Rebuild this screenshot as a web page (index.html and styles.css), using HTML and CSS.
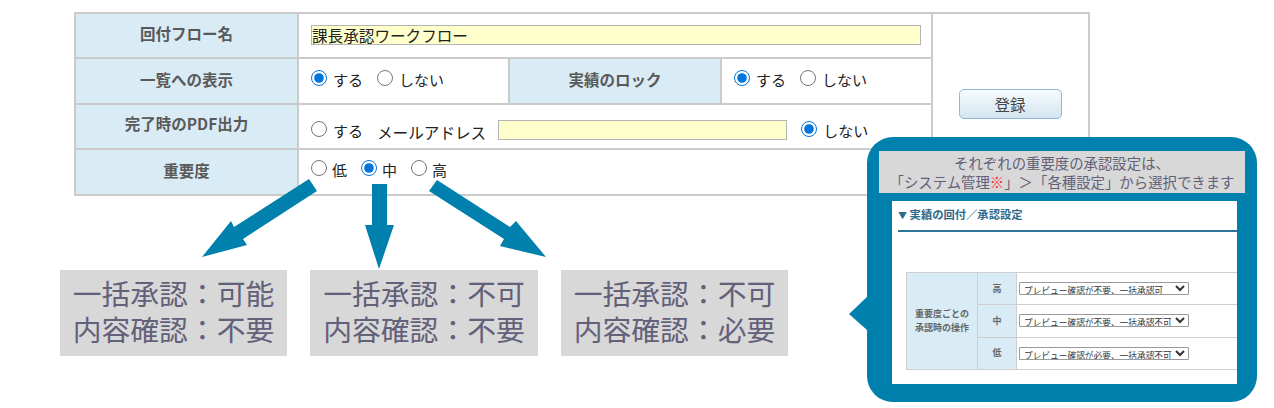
FILE: index.html
```html
<!DOCTYPE html>
<html lang="ja">
<head>
<meta charset="utf-8">
<title>回付フロー</title>
<link rel="stylesheet" href="styles.css">
</head>
<body>
<main class="page">
  <table class="form">
    <colgroup><col class="c1"><col class="c2"><col class="c3"><col class="c4"><col class="c5"></colgroup>
    <tr class="r1">
      <th>回付フロー名</th>
      <td colspan="3"><input class="text wide" type="text" value="課長承認ワークフロー"></td>
      <td rowspan="4" class="action"><button class="submit" type="button">登録</button></td>
    </tr>
    <tr class="r2">
      <th>一覧への表示</th>
      <td><div class="opts"><label class="opt"><input type="radio" name="a" checked>する</label><label class="opt"><input type="radio" name="a">しない</label></div></td>
      <th>実績のロック</th>
      <td><div class="opts"><label class="opt"><input type="radio" name="b" checked>する</label><label class="opt"><input type="radio" name="b">しない</label></div></td>
    </tr>
    <tr class="r3">
      <th>完了時のPDF出力</th>
      <td colspan="3"><div class="opts pdf"><label class="opt"><input type="radio" name="c">する</label><span class="mail">メールアドレス</span><input class="text mailbox" type="text"><label class="opt"><input type="radio" name="c" checked>しない</label></div></td>
    </tr>
    <tr class="r4">
      <th>重要度</th>
      <td colspan="3"><div class="opts level"><label class="opt"><input type="radio" name="d">低</label><label class="opt"><input type="radio" name="d" checked>中</label><label class="opt"><input type="radio" name="d">高</label></div></td>
    </tr>
  </table>

  <svg class="arrows" width="1274" height="408" viewBox="0 0 1274 408" aria-hidden="true">
    <polygon points="309,179 317,191 243,239 247,245 202,257 231,221 234,227"/>
    <polygon points="372,184 387,184 387,225 394,225 379,269 365,225 372,225"/>
    <polygon points="437,180 429,191 504,239 500,246 546,257 516,221 510,227"/>
    <polygon points="867,297 849,314 867,330"/>
  </svg>

  <div class="notes">
    <p class="note n1">一括承認&#xFF1A;可能<br>内容確認&#xFF1A;不要</p>
    <p class="note n2">一括承認&#xFF1A;不可<br>内容確認&#xFF1A;不要</p>
    <p class="note n3">一括承認&#xFF1A;不可<br>内容確認&#xFF1A;必要</p>
  </div>

  <aside class="callout">
    <p class="callout-head">それぞれの重要度の承認設定は、<br>「システム管理<span class="mark">※</span>」&#xFF1E;「各種設定」から選択できます</p>
    <div class="shot">
      <h2 class="shot-title"><span class="tri">▼</span> 実績の回付&#xFF0F;承認設定</h2>
      <table class="mini">
        <colgroup><col class="m1"><col class="m2"><col class="m3"></colgroup>
        <tr>
          <th rowspan="3">重要度ごとの<br>承認時の操作</th>
          <th>高</th>
          <td><select class="pick"><option>プレビュー確認が不要、一括承認可</option></select></td>
        </tr>
        <tr>
          <th>中</th>
          <td><select class="pick"><option>プレビュー確認が不要、一括承認不可</option></select></td>
        </tr>
        <tr>
          <th>低</th>
          <td><select class="pick"><option>プレビュー確認が必要、一括承認不可</option></select></td>
        </tr>
      </table>
    </div>
  </aside>
</main>
</body>
</html>
```
FILE: styles.css
```css
* { box-sizing: border-box; }
html, body { margin: 0; padding: 0; background: #fff; }
body { font-family: "Noto Sans CJK JP", "Noto Sans", sans-serif; color: #222; overflow: hidden; }
.page { position: relative; width: 1274px; height: 408px; padding: 12px 0 0 74px; }

.form { border-collapse: collapse; table-layout: fixed; width: 1014px; height: 182px; font-size: 15.6px; }
.form th, .form td { border: 2px solid #cbcbcb; padding: 0; }
.c1 { width: 223px; } .c2 { width: 211px; } .c3 { width: 212px; } .c4 { width: 211px; } .c5 { width: 157px; }
.r1 { height: 45px; } .r2 { height: 46px; } .r3 { height: 45px; } .r4 { height: 46px; }
.form th { background: #d9ebf4; color: #595959; font-weight: 700; font-size: 15.5px; padding-bottom: 5px; }
.form .r3 th { padding-bottom: 7px; }
.form td { padding-left: 12px; line-height: 20px; }
.form td.action { padding: 0; text-align: center; }

.text { display: block; height: 20px; margin: 0; padding: 0; border: 1px solid #b4b4b4; background: #ffffcc; font: inherit; color: #222; line-height: 18px; border-radius: 0; outline: 0; }
.wide { width: 610px; margin-bottom: 2px; }
.mailbox { width: 289px; margin: -2px 14px 0 12px; }

.opts { display: flex; align-items: center; gap: 14px; padding-bottom: 2px; }
.opt { display: inline-flex; align-items: center; gap: 6px; line-height: 20px; font-size: 15px; }
.opt input { width: 16px; height: 16px; margin: -5px 0 0; accent-color: #0075db; flex: none; }
.pdf { gap: 0; padding: 9px 0 0; }
.pdf .opt:first-child { margin-right: 14px; }
.mail { font-size: 15.6px; margin-top: 1px; }
.level { gap: 14px; padding: 0 0 4px; }
.level .opt { gap: 5px; font-size: 15px; }

.submit { width: 103px; height: 30px; margin: 0 1px 0 0; border: 1px solid #8fb8d8; border-radius: 5px; background: linear-gradient(#f7fbfd, #d3e5f0); color: #444; font: inherit; font-size: 15.5px; padding: 0; }

.arrows { position: absolute; left: 0; top: 0; pointer-events: none; }
.arrows polygon { fill: #0080ad; }

.notes { display: flex; gap: 23px; margin: 74px 0 0 -14px; }
.note { width: 227px; height: 86px; margin: 0; padding: 5px 0 0; background: #d8d8d8; color: #63607a; font-size: 28.8px; line-height: 36px; text-align: center; white-space: nowrap; }
.n2 { width: 228px; }

.callout { position: absolute; left: 867px; top: 137px; width: 390px; height: 265px; padding: 14px 12px 0; background: #0080ad; border-radius: 26px; }
.callout-head { margin: 0; height: 42px; background: #d8d8d8; color: #63607a; font-size: 14.4px; line-height: 19px; text-align: center; padding-top: 2px; white-space: nowrap; }
.mark { color: #ff3333; }
.shot { width: 345px; height: 183px; margin: 8px 0 0 13px; background: #fff; overflow: hidden; padding: 6px 0 0 6px; }
.shot-title { margin: 0; height: 25px; border-bottom: 2px solid #2d7697; font-size: 11.3px; line-height: 15px; font-weight: 700; color: #2a6b8c; white-space: nowrap; }
.tri { font-size: 9px; }

.mini { border-collapse: collapse; table-layout: fixed; width: 420px; height: 98px; margin: 40px 0 0 8px; font-size: 9px; }
.mini th, .mini td { border: 1px solid #cfcfcf; padding: 0; }
.m1 { width: 71px; } .m2 { width: 39px; }
.mini th { background: #d9ebf4; color: #666; font-weight: 700; line-height: 14px; font-size: 9px; }
.mini td { padding-left: 2px; vertical-align: middle; }
.pick { display: block; width: 170px; height: 13px; padding: 0; margin: 0; border: 1px solid #999; border-radius: 1px; background: #fff; color: #333; font: inherit; font-size: 8.7px; line-height: 11px; }
```
